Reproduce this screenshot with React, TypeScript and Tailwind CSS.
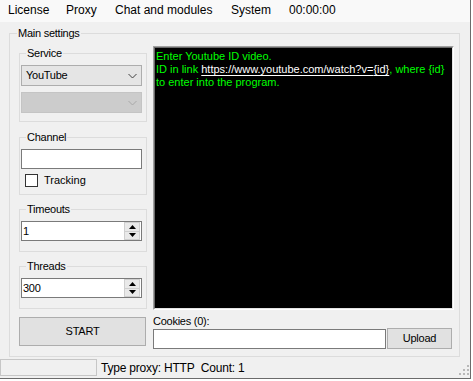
import React from "react";

function Legend({ text, ml = 6 }: { text: string; ml?: number }) {
  return (
    <span
      className={`block w-fit -mt-[7px] px-[1px] bg-[#f0f0f0] leading-[13px] ${ml === 7 ? "ml-[7px]" : "ml-[6px]"}`}
    >
      {text}
    </span>
  );
}

function Chevron({ color }: { color: string }) {
  return (
    <svg width="9" height="6" viewBox="0 0 9 6" className="shrink-0">
      <polyline points="0.5,1 4.5,5 8.5,1" fill="none" stroke={color} strokeWidth="1" />
    </svg>
  );
}

function Numeric({ value }: { value: string }) {
  return (
    <div className="ml-[1px] mt-[5px] w-[121px] h-[20px] border border-[#7a7a7a] bg-white flex items-stretch">
      <div className="flex-1 pl-[1px] leading-[18px]">{value}</div>
      <div className="w-[16px] flex flex-col bg-[#f0f0f0] mr-[1px]">
        <div className="flex-1 flex items-center justify-center border border-[#cfcfcf] bg-[#e9e9e9]">
          <svg width="7" height="4" viewBox="0 0 7 4">
            <polygon points="3.5,0 7,4 0,4" fill="#000" />
          </svg>
        </div>
        <div className="flex-1 flex items-center justify-center border border-[#cfcfcf] border-t-0 bg-[#e9e9e9]">
          <svg width="7" height="4" viewBox="0 0 7 4">
            <polygon points="0,0 7,0 3.5,4" fill="#000" />
          </svg>
        </div>
      </div>
    </div>
  );
}

export default function App() {
  return (
    <div className="w-[473px] h-[381px] bg-white font-['Liberation_Sans',Arial,sans-serif] text-[11px] text-black tracking-[-0.25px]">
      <div className="w-[471px] h-[379px] border-r border-b border-[#6b6b6b] bg-[#f0f0f0] flex flex-col">
        {/* Menu bar */}
        <div className="h-[22px] shrink-0 bg-[#f9f9f9] flex pl-[8px] text-[12px] leading-[20px] tracking-normal">
          <span className="w-[58px]">License</span>
          <span className="w-[49px]">Proxy</span>
          <span className="w-[116px]">Chat and modules</span>
          <span className="w-[58px]">System</span>
          <span>00:00:00</span>
        </div>

        {/* Main area */}
        <div className="h-[335px] shrink-0 pl-[9px] pt-[11px]">
          <div className="w-[451px] h-[324px] border border-[#dcdcdc] flex flex-col">
            <Legend text="Main settings" ml={7} />
            <div className="flex items-start">
              {/* Left column */}
              <div className="ml-[9px] mt-[13px] w-[128px] flex flex-col">
                <div className="h-[69px] border border-[#dcdcdc] flex flex-col">
                  <Legend text="Service" />
                  <div className="ml-[1px] mt-[5px] w-[121px] h-[21px] border border-[#adadad] bg-[#e5e5e5] flex items-center pl-[4px] pr-[4px]">
                    <span className="flex-1 leading-[19px]">YouTube</span>
                    <Chevron color="#404040" />
                  </div>
                  <div className="ml-[1px] mt-[6px] w-[121px] h-[21px] border border-[#c4c4c4] bg-[#cccccc] flex items-center pl-[4px] pr-[4px]">
                    <span className="flex-1" />
                    <Chevron color="#a8a8a8" />
                  </div>
                </div>

                <div className="mt-[15px] h-[58px] border border-[#dcdcdc] flex flex-col">
                  <Legend text="Channel" />
                  <div className="ml-[1px] mt-[5px] w-[121px] h-[20px] border border-[#7a7a7a] bg-white" />
                  <div className="mt-[5px] ml-[5px] flex items-center">
                    <div className="w-[13px] h-[13px] border border-[#333333] bg-white" />
                    <span className="ml-[6px] leading-[13px] tracking-normal">Tracking</span>
                  </div>
                </div>

                <div className="mt-[14px] h-[43px] border border-[#dcdcdc] flex flex-col">
                  <Legend text="Timeouts" />
                  <Numeric value="1" />
                </div>

                <div className="mt-[14px] h-[43px] border border-[#dcdcdc] flex flex-col">
                  <Legend text="Threads" />
                  <Numeric value="300" />
                </div>

                <button className="mt-[8px] w-[127px] h-[29px] border border-[#adadad] bg-[#e1e1e1] text-center leading-[27px]">
                  START
                </button>
              </div>

              {/* Right column */}
              <div className="ml-[6px] mt-[6px] flex flex-col">
                <div className="w-[301px] h-[264px] border border-t-[#a0a0a0] border-l-[#a0a0a0] border-r-white border-b-white">
                  <div className="w-full h-full border border-t-[#696969] border-l-[#696969] border-r-[#e3e3e3] border-b-[#e3e3e3] bg-black pl-[1px] pt-[2px] text-[#00ff00] leading-[13px] whitespace-nowrap tracking-normal">
                    <div>Enter Youtube ID video.</div>
                    <div>
                      ID in link{" "}
                      <span className="text-white underline underline-offset-[2px]">
                        https://www.youtube.com/watch?v={"{id}"}
                      </span>
                      , where {"{id}"}
                    </div>
                    <div>to enter into the program.</div>
                  </div>
                </div>
                <div className="mt-[5px] leading-[13px]">Cookies (0):</div>
                <div className="flex items-start">
                  <div className="mt-[1px] w-[233px] h-[20px] border border-[#7a7a7a] bg-white" />
                  <button className="ml-[1px] w-[65px] h-[21px] border border-[#adadad] bg-[#e1e1e1] text-center leading-[19px]">
                    Upload
                  </button>
                </div>
              </div>
            </div>
          </div>
        </div>

        {/* Status bar */}
        <div className="h-[21px] shrink-0 flex items-start text-[12px] tracking-[-0.2px]">
          <div className="mt-[2px] w-[97px] h-[17px] border border-[#c6c6c6]" />
          <span className="ml-[4px] mt-[3px] leading-[16px]">Type proxy: HTTP&nbsp;&nbsp;Count: 1</span>
          <svg width="12" height="12" viewBox="0 0 12 12" className="ml-auto mt-[7px]">
            <rect x="9" y="1" width="2" height="2" fill="#b8b8b8" />
            <rect x="5" y="5" width="2" height="2" fill="#b8b8b8" />
            <rect x="9" y="5" width="2" height="2" fill="#b8b8b8" />
            <rect x="1" y="9" width="2" height="2" fill="#b8b8b8" />
            <rect x="5" y="9" width="2" height="2" fill="#b8b8b8" />
            <rect x="9" y="9" width="2" height="2" fill="#b8b8b8" />
          </svg>
        </div>
      </div>
    </div>
  );
}
